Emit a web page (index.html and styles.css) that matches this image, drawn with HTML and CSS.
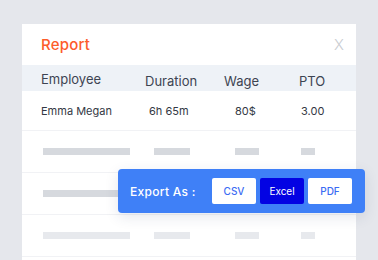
FILE: index.html
```html
<!DOCTYPE html>
<html lang="en">
<head>
  <meta charset="UTF-8" />
  <title>Report</title>
  <link rel="stylesheet" href="styles.css">
</head>
<body>
  <section class="card">
    <div class="card-head">
      <h2>Report</h2>
      <span class="close">X</span>
    </div>

    <div class="row head">
      <span class="c-emp">Employee</span>
      <span class="c-dur">Duration</span>
      <span class="c-wage">Wage</span>
      <span class="c-pto">PTO</span>
    </div>

    <div class="row data">
      <span class="c-emp">Emma Megan</span>
      <span class="c-dur">6h 65m</span>
      <span class="c-wage">80$</span>
      <span class="c-pto">3.00</span>
    </div>

    <div class="row skel">
      <span class="c-emp"><i class="bar b1"></i></span>
      <span class="c-dur"><i class="bar b2"></i></span>
      <span class="c-wage"><i class="bar b3"></i></span>
      <span class="c-pto"><i class="bar b4"></i></span>
    </div>

    <div class="row skel popup-row">
      <span class="c-emp"><i class="bar b1"></i></span>
      <span class="c-dur"><i class="bar b2"></i></span>
      <span class="c-wage"><i class="bar b3"></i></span>
      <span class="c-pto"><i class="bar b4"></i></span>

      <!-- export popup -->
      <div class="export">
        <span class="export-label">Export As :</span>
        <button class="btn">CSV</button>
        <button class="btn active">Excel</button>
        <button class="btn">PDF</button>
      </div>
    </div>

    <div class="row skel light">
      <span class="c-emp"><i class="bar b1"></i></span>
      <span class="c-dur"><i class="bar b2"></i></span>
      <span class="c-wage"><i class="bar b3"></i></span>
      <span class="c-pto"><i class="bar b4"></i></span>
    </div>
  </section>
</body>
</html>
```

FILE: styles.css
```css
* {
  box-sizing: border-box;
}

html, body {
  margin: 0;
  height: 100%;
  overflow: hidden;
}

body {
  background: #e5e7ec;
  font-family: 'Inter', 'Liberation Sans', sans-serif;
  padding: 24px 22px 0;
}

.card {
  background: #fff;
  width: 334px;
  height: 240px;
}

.card-head {
  display: flex;
  justify-content: space-between;
  align-items: center;
  height: 41px;
  padding: 0 12px 0 19px;
}

h2 {
  margin: 0;
  font-size: 15px;
  font-weight: 500;
  color: #fd5c2b;
  letter-spacing: 0.2px;
}

.close {
  font-size: 15px;
  font-weight: 300;
  color: #c9ccd1;
}

.row {
  display: flex;
  align-items: center;
  height: 42px;
  padding-left: 19px;
  border-bottom: 1px solid #f1f2f5;
  position: relative;
}

.row.head {
  height: 26px;
  padding-top: 5px;
  background: #eef2f7;
  border-bottom: none;
  font-size: 13px;
  color: #3d4452;
}

.row.head .c-emp {
  margin-top: -4px;
}

.row.data {
  height: 40px;
  font-size: 11px;
  color: #333844;
}

.c-emp { width: 104px; }
.c-dur { width: 79px; }
.c-wage { width: 75px; }
.c-pto { width: 40px; }

.row.data .c-dur { padding-left: 4px; }
.row.data .c-wage { padding-left: 11px; }
.row.data .c-pto { padding-left: 2px; }

.bar {
  display: block;
  height: 7px;
  background: #d6d9de;
}

.light .bar {
  background: #e7e9ed;
}

.row.skel .c-emp { padding-left: 2px; }
.row.skel .c-dur { padding-left: 9px; }
.row.skel .c-wage { padding-left: 11px; }
.row.skel .c-pto { padding-left: 2px; }

.b1 { width: 87px; }
.b2 { width: 36px; }
.b3 { width: 24px; }
.b4 { width: 14px; }

.export {
  position: absolute;
  left: 96px;
  top: -4px;
  width: 247px;
  height: 44px;
  background: #3f80f7;
  border-radius: 4px;
  box-shadow: 0 4px 14px rgba(40, 60, 100, 0.12);
  display: flex;
  align-items: center;
  padding: 0 12px;
  gap: 4px;
}

.export-label {
  width: 78px;
  flex-shrink: 0;
  white-space: nowrap;
  color: #fff;
  font-size: 12px;
  font-weight: 500;
  letter-spacing: 0.3px;
}

.btn {
  width: 44px;
  height: 26px;
  flex-shrink: 0;
  border: none;
  border-radius: 2px;
  background: #fff;
  color: #3b6cf3;
  font-family: inherit;
  font-size: 10px;
  font-weight: 500;
  padding: 0;
}

.btn.active {
  background: #0303e3;
  color: #fff;
  font-weight: 400;
}
```
